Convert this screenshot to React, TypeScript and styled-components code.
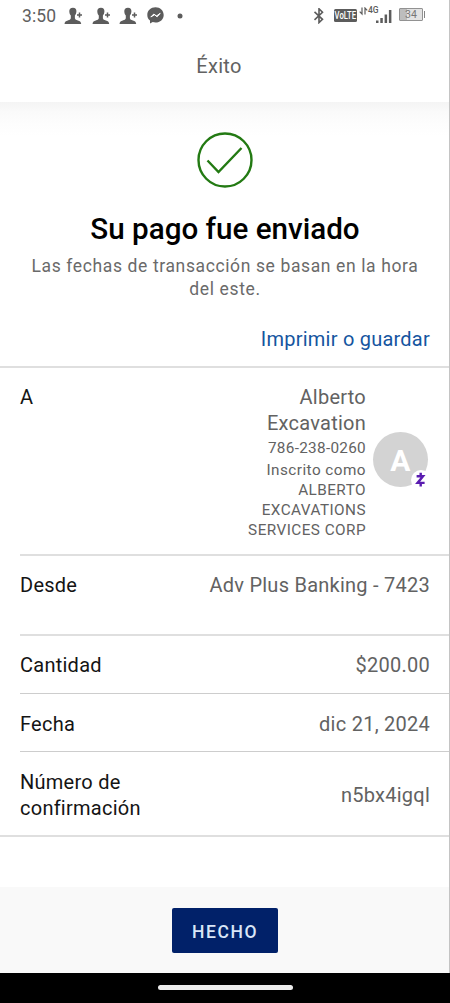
import React from "react";
import styled, { createGlobalStyle } from "styled-components";

const Global = createGlobalStyle`
  * { box-sizing: border-box; }
  body { margin: 0; background: #fff; font-family: Roboto, sans-serif; }
  h1, p { margin: 0; }
`;

const Screen = styled.main`
  width: 450px;
  height: 1003px;
  display: flex;
  flex-direction: column;
  background: #fff;
  position: relative;
  overflow: hidden;
  color: #626262;
`;

const EdgeLine = styled.div`
  position: absolute;
  top: 0;
  right: 0;
  width: 1px;
  height: 973px;
  background: #c4c4c4;
`;

const StatusBar = styled.div`
  height: 32px;
  flex: none;
  display: flex;
  justify-content: space-between;
  padding: 0 25px 0 22px;
`;

const StatusGroup = styled.div`
  display: flex;
  align-items: center;
  height: 31px;
`;

const Clock = styled.span`
  font-size: 17.5px;
  letter-spacing: 0.1px;
  width: 42px;
  color: #5f5f5f;
`;

const Icon = styled.svg<{ $gap?: number }>`
  display: block;
  flex: none;
  margin-right: ${(p) => p.$gap ?? 0}px;
`;

const Volte = styled.span`
  width: 23px;
  height: 13px;
  flex: none;
  margin-right: 2px;
  border-radius: 1.5px;
  background: #5c5c5c;
  color: #fff;
  display: flex;
  align-items: center;
  justify-content: center;
  font: 500 11px/13px Roboto, sans-serif;
  white-space: nowrap;
`;

const Condensed = styled.span`
  flex: none;
  transform: scaleX(0.7);
`;

const Network = styled.span`
  align-self: flex-start;
  margin-top: 5px;
  width: 8px;
  font: 500 8.5px/11px Roboto, sans-serif;
  color: #5c5c5c;
`;

const Battery = styled.span`
  width: 24px;
  height: 13px;
  border: 1px solid #929292;
  border-radius: 1px;
  background: linear-gradient(90deg, #bdbdbd 34%, #e2e2e2 34%);
  color: #777;
  font: 400 10.5px/11px Roboto, sans-serif;
  text-align: center;
  margin-bottom: 2px;
`;

const BatteryTip = styled.span`
  width: 1px;
  height: 7px;
  margin: 0 0 2px 1px;
  background: #858585;
`;

const Header = styled.header`
  height: 70px;
  flex: none;
  padding-top: 21px;
  text-align: center;
  font-size: 20px;
  line-height: 27px;
  letter-spacing: 0.35px;
  padding-right: 12px;
`;

const Success = styled.section`
  height: 265px;
  flex: none;
  display: flex;
  flex-direction: column;
  align-items: center;
  padding-top: 29px;
  background: linear-gradient(#f4f4f4 0, #fafafa 10px, #fdfdfd 22px, #fff 34px);
`;

const Title = styled.h1`
  margin-top: 22px;
  font-size: 29.6px;
  line-height: 36px;
  font-weight: 500;
  color: #000;
  white-space: nowrap;
`;

const Note = styled.p`
  margin-top: 8px;
  font-size: 17.5px;
  line-height: 23px;
  letter-spacing: 0.62px;
  text-align: center;
  color: #6a6a6a;
  white-space: nowrap;
`;

const PrintLink = styled.a`
  align-self: flex-end;
  margin: 25px 20px 0 0;
  font-size: 20px;
  line-height: 26px;
  letter-spacing: 0.23px;
  color: #1555a0;
`;

const Details = styled.section`
  flex: none;
  border-top: 2px solid #dfdfdf;
  border-bottom: 2px solid #dfdfdf;
  margin-top: -1px;
  padding-left: 20px;
  height: 471px;
`;

const dividers = {
  none: "0",
  thick: "2px solid #dfdfdf",
  thin: "1px solid #cdcdcd",
};

const Row = styled.div<{ $height: number; $divider: keyof typeof dividers; $center?: boolean }>`
  height: ${(p) => p.$height}px;
  display: flex;
  justify-content: space-between;
  align-items: ${(p) => (p.$center ? "center" : "flex-start")};
  padding: ${(p) => (p.$center ? "2px" : p.$divider === "thin" ? "17px" : "16px")} 20px 0 0;
  border-top: ${(p) => dividers[p.$divider]};
  font-size: 20px;
  line-height: 26px;
  letter-spacing: 0.25px;
`;

const Label = styled.span`
  color: #141414;
`;

const Value = styled.span`
  color: #626262;
  white-space: nowrap;
`;

const Recipient = styled.div`
  display: flex;
  gap: 7px;
  text-align: right;
`;

const RecipientText = styled.div`
  display: flex;
  flex-direction: column;
  font-size: 15.3px;
  line-height: 20px;
  letter-spacing: 0.45px;
`;

const Name = styled.span`
  font-size: 20px;
  line-height: 26px;
  letter-spacing: 0.25px;
`;

const Phone = styled.span`
  margin-top: 1px;
  line-height: 23px;
  letter-spacing: 0.3px;
`;

const Avatar = styled.div`
  position: relative;
  width: 55px;
  height: 55px;
  margin: 48px 2px 0 0;
  border-radius: 50%;
  background: #d3d3d3;
  color: #fff;
  font: 700 30px/57px Roboto, sans-serif;
  text-align: center;
`;

const ZelleBadge = styled.span`
  position: absolute;
  right: -3px;
  bottom: -3px;
  width: 20px;
  height: 20px;
  border-radius: 50%;
  background: #fff;
`;

const Footer = styled.footer`
  margin-top: auto;
  height: 86px;
  flex: none;
  display: flex;
  justify-content: center;
  align-items: flex-start;
  padding-top: 21px;
  background: #f9f9f9;
`;

const DoneButton = styled.button`
  width: 106px;
  height: 45px;
  padding: 2px 0 0;
  border: 0;
  border-radius: 2px;
  background: #012169;
  color: #d9e6f8;
  font: 500 17.5px/24px Roboto, sans-serif;
  letter-spacing: 1.6px;
`;

const NavBar = styled.div`
  height: 30px;
  flex: none;
  background: #000;
  display: flex;
  justify-content: center;
  padding-top: 12px;
`;

const HomePill = styled.span`
  width: 135px;
  height: 5px;
  border-radius: 3px;
  background: #ececec;
`;

const PersonAdd = ({ gap }: { gap: number }) => (
  <Icon $gap={gap} width="18" height="18" viewBox="0 0 18 18" fill="#5c5c5c">
    <path d="M9 .8c2.400 0 3.600 1.500 3.400 3.800-.1 1.900-.8 3.200-1.500 4v2.600c.3 1.300 1.200 1.700 3 2.300 1.900.6 3 1.200 3.300 3.500H.5c.3-2.300 1.400-2.900 3.300-3.500 1.800-.6 2.700-1 3-2.300V8.600c-.8-.8-1.400-2.100-1.500-4C5.100 2.300 6.500.8 9 .8z" />
    <path d="M13 7.200h5v1.500h-5zM14.750 5.400h1.500v5h-1.500z" />
  </Icon>
);

const rows = [
  { label: "Desde", value: "Adv Plus Banking - 7423", height: 80, divider: "thick" },
  { label: "Cantidad", value: "$200.00", height: 59, divider: "thick" },
  { label: "Fecha", value: "dic 21, 2024", height: 58, divider: "thin" },
] as const;

export default function App() {
  return (
    <Screen>
      <Global />
      <StatusBar>
        <StatusGroup>
          <Clock>3:50</Clock>
          <PersonAdd gap={10} />
          <PersonAdd gap={9} />
          <PersonAdd gap={10} />
          <Icon $gap={13} width="17" height="17" viewBox="0 0 17 17">
            <path d="M8.500.2C3.900.2.300 3.400.300 7.900c0 2.400 1 4.400 2.700 5.700v3l2.700-1.500c.9.2 1.800.4 2.800.4 4.700 0 8.200-3.300 8.200-7.600S13.200.2 8.500.2z" fill="#5c5c5c" />
            <path d="M3.800 10l3-3 2.700 2 3.700-2.700-3 3.400-2.700-1.900z" fill="#fff" stroke="#fff" strokeWidth="1" strokeLinejoin="round" />
          </Icon>
          <Icon width="6" height="6" viewBox="0 0 6 6">
            <circle cx="3" cy="3" r="2.500" fill="#5c5c5c" />
          </Icon>
        </StatusGroup>
        <StatusGroup>
          <Icon $gap={9} width="12" height="16" viewBox="0 0 12 16" fill="none" stroke="#5c5c5c" strokeWidth="1.600">
            <path d="M1.500 3.800l8 7.500L6 14.600V.8l3.500 3.500-8 7.500" />
          </Icon>
          <Volte><Condensed>VoLTE</Condensed></Volte>
          <Icon width="9" height="17" viewBox="0 0 9 17" fill="none" stroke="#5c5c5c" strokeWidth="1.200">
            <path d="M3 .5v6.500L.7 4.700M6 7.500V1l2.200 2.300" />
          </Icon>
          <Network>4G</Network>
          <Icon $gap={7} width="16" height="16" viewBox="0 0 16 16" fill="#5c5c5c">
            <path d="M0 12.500h2.500V15H0zM4.300 10h2.500v5H4.300zM8.600 6.500h2.500V15H8.600zM12.900 2h2.500v13h-2.500z" />
          </Icon>
          <Battery>34</Battery>
          <BatteryTip />
        </StatusGroup>
      </StatusBar>
      <Header>Éxito</Header>
      <Success>
        <Icon width="58" height="58" viewBox="0 0 58 58" fill="none" stroke="#237a13" strokeWidth="2.400">
          <circle cx="29" cy="29" r="26.500" />
          <path d="M11.500 29.500L22.500 41 45.500 17" />
        </Icon>
        <Title>Su pago fue enviado</Title>
        <Note>
          Las fechas de transacción se basan en la hora
          <br />
          del este.
        </Note>
        <PrintLink>Imprimir o guardar</PrintLink>
      </Success>
      <Details>
        <Row $height={186} $divider="none">
          <Label>A</Label>
          <Recipient>
            <RecipientText>
              <Name>Alberto</Name>
              <Name>Excavation</Name>
              <Phone>786-238-0260</Phone>
              <span>Inscrito como</span>
              <span>ALBERTO</span>
              <span>EXCAVATIONS</span>
              <span>SERVICES CORP</span>
            </RecipientText>
            <Avatar>
              A
              <ZelleBadge>
                <Icon width="20" height="20" viewBox="0 0 20 20" fill="none" stroke="#5a1cb0" strokeWidth="2.400">
                  <path d="M5.600 6.300h6.400L6.600 12.900h7M9.700 2.800v3.500M9.700 12.900v3.500" />
                </Icon>
              </ZelleBadge>
            </Avatar>
          </Recipient>
        </Row>
        {rows.map((r) => (
          <Row key={r.label} $height={r.height} $divider={r.divider}>
            <Label>{r.label}</Label>
            <Value>{r.value}</Value>
          </Row>
        ))}
        <Row $height={84} $divider="thin" $center>
          <Label>
            Número de
            <br />
            confirmación
          </Label>
          <Value>n5bx4igql</Value>
        </Row>
      </Details>
      <Footer>
        <DoneButton>HECHO</DoneButton>
      </Footer>
      <NavBar>
        <HomePill />
      </NavBar>
      <EdgeLine />
    </Screen>
  );
}
